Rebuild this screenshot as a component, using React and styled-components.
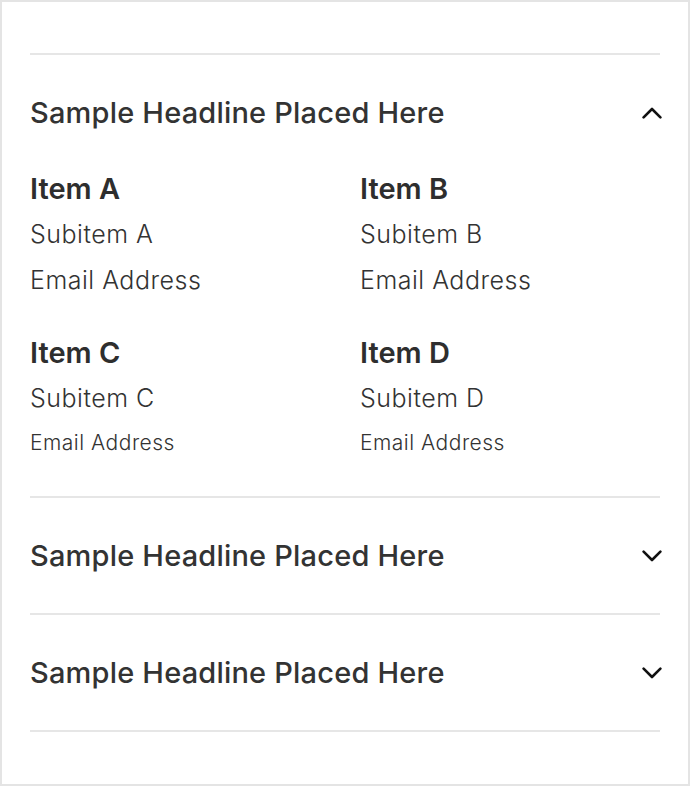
import React, { useState } from "react";
import styled, { createGlobalStyle } from "styled-components";

const GlobalStyle = createGlobalStyle`
  html, body {
    margin: 0;
    padding: 0;
    background: #ffffff;
  }
  * {
    box-sizing: border-box;
  }
`;

//Data
const sections = [
  {
    id: 1,
    title: "Sample Headline Placed Here",
    items: [
      { name: "Item A", sub: "Subitem A", email: "Email Address" },
      { name: "Item B", sub: "Subitem B", email: "Email Address" },
      { name: "Item C", sub: "Subitem C", email: "Email Address", small: true },
      { name: "Item D", sub: "Subitem D", email: "Email Address", small: true },
    ],
  },
  { id: 2, title: "Sample Headline Placed Here", items: [] },
  { id: 3, title: "Sample Headline Placed Here", items: [] },
];

const Chevron = ({ open }) => (
  <Icon width="20" height="12" viewBox="0 0 20 12" fill="none">
    <path
      d={open ? "M1.6 10.4L10 2L18.4 10.4" : "M1.6 1.6L10 10L18.4 1.6"}
      stroke="#111"
      strokeWidth="2.6"
      strokeLinecap="round"
      strokeLinejoin="round"
    />
  </Icon>
);

const App = () => {
  const [openId, setOpenId] = useState(1);

  return (
    <>
      <GlobalStyle />
      <Frame>
        <Accordion>
          {sections.map((section) => {
            const open = openId === section.id;
            return (
              <Section key={section.id}>
                <Header onClick={() => setOpenId(open ? null : section.id)}>
                  <Headline>{section.title}</Headline>
                  <Chevron open={open} />
                </Header>
                {open && (
                  <Grid>
                    {section.items.map((item) => (
                      <Card key={item.name}>
                        <ItemName>{item.name}</ItemName>
                        <SubItem>{item.sub}</SubItem>
                        <Email $small={item.small}>{item.email}</Email>
                      </Card>
                    ))}
                  </Grid>
                )}
              </Section>
            );
          })}
        </Accordion>
      </Frame>
    </>
  );
};

const Frame = styled.div`
  width: 690px;
  height: 786px;
  border: 2px solid #e4e4e4;
  background: #ffffff;
  padding: 51px 28px 0;
  font-family: Inter, "Liberation Sans", sans-serif;
  color: #333333;
`;

const Accordion = styled.div`
  border-top: 2px solid #e6e6e6;
`;

const Section = styled.div`
  border-bottom: 2px solid #e6e6e6;
`;

const Header = styled.div`
  display: flex;
  align-items: center;
  justify-content: space-between;
  height: 115px;
  cursor: pointer;
`;

const Icon = styled.svg`
  flex: none;
  margin-right: -2px;
`;

const Headline = styled.h2`
  margin: 0;
  font-size: 29px;
  font-weight: 500;
  letter-spacing: 0.2px;
  line-height: 36px;
  color: #333333;
`;

const Grid = styled.div`
  display: grid;
  grid-template-columns: 1fr 1fr;
  column-gap: 30px;
  row-gap: 40px;
  padding: 2px 0 37px;
`;

const Card = styled.div`
  display: flex;
  flex-direction: column;
`;

const ItemName = styled.h3`
  margin: 0;
  font-size: 29px;
  font-weight: 600;
  line-height: 34px;
  color: #2e2e2e;
`;

const SubItem = styled.p`
  margin: 12px 0 0;
  font-size: 25px;
  font-weight: 300;
  letter-spacing: 0.5px;
  line-height: 32px;
  color: #333333;
`;

const Email = styled.p`
  margin: ${(p) => (p.$small ? "13px" : "14px")} 0 0;
  font-size: ${(p) => (p.$small ? "21px" : "25px")};
  font-weight: 300;
  letter-spacing: 0.5px;
  line-height: 32px;
  color: #333333;
`;

export default App;
